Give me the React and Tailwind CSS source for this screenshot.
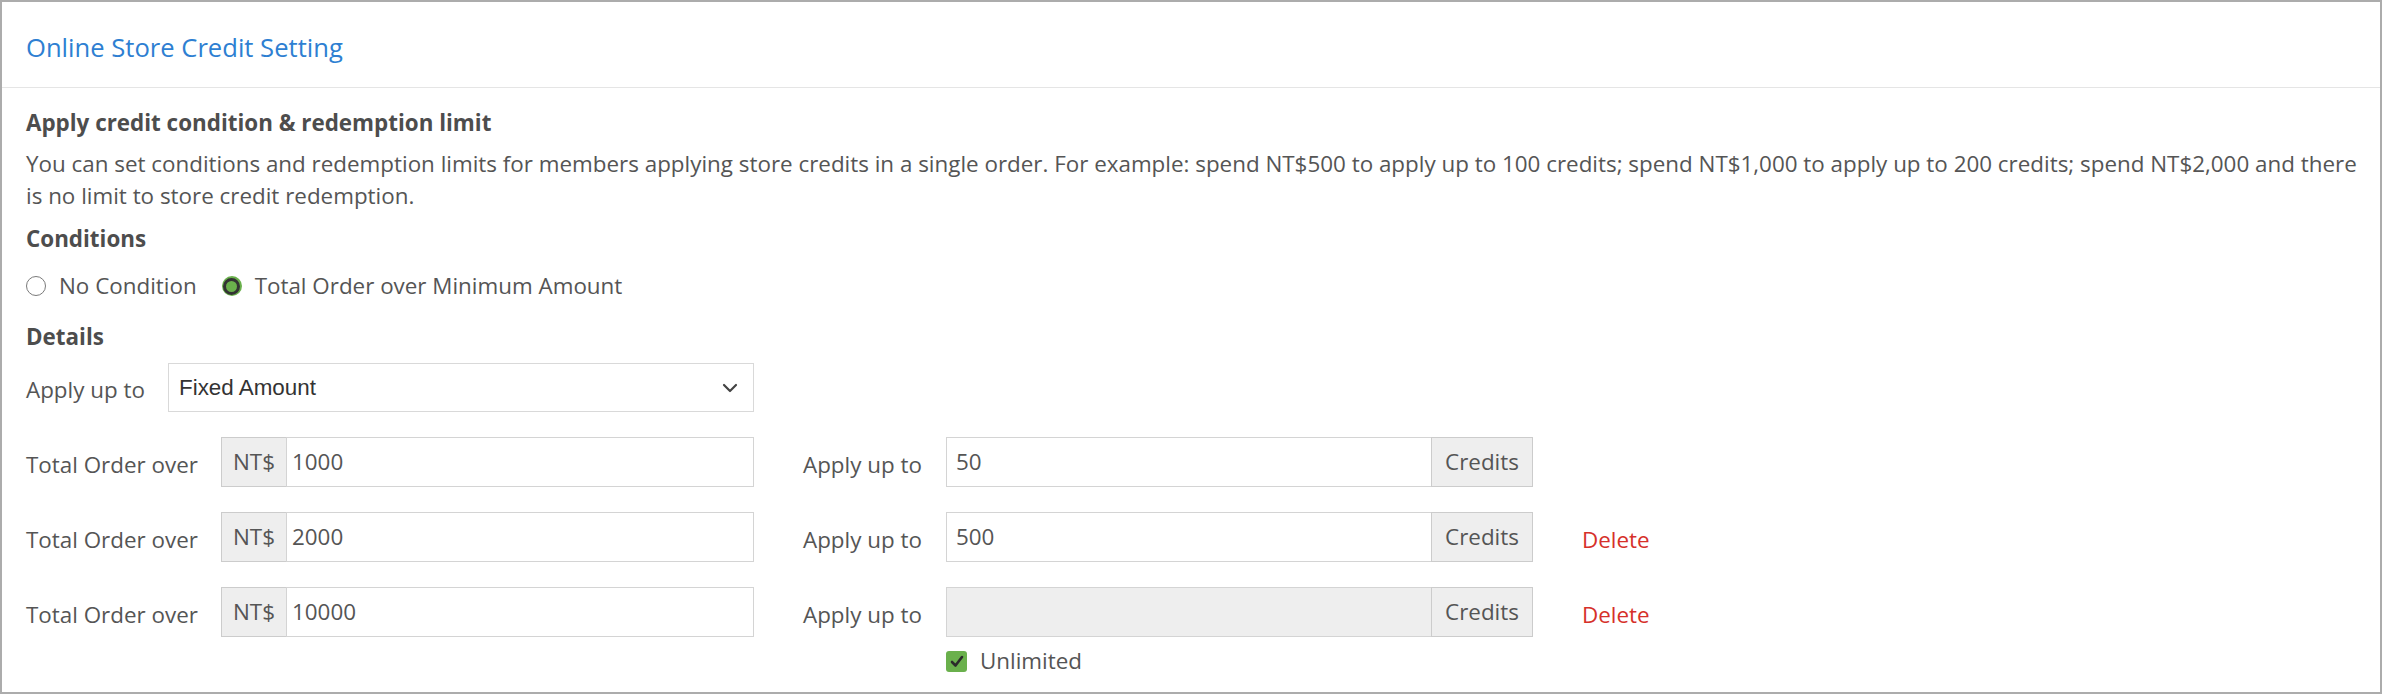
import React from 'react';

function Chevron() {
  return (
    <svg width="16" height="10" viewBox="0 0 16 10" fill="none">
      <polyline points="2,2 8,8 14,2" stroke="#444" strokeWidth="2.2" strokeLinecap="round" strokeLinejoin="round" />
    </svg>
  );
}

function CreditRow({ amount, credits, unlimited, removable }) {
  return (
    <div className="flex items-center h-[50px] mt-[25px]">
      <span className="w-[195px] pt-[6px]">Total Order over</span>
      <div className="flex w-[533px] h-[50px]">
        <span className="w-[65px] flex items-center justify-center bg-[#eeeeee] border border-[#cccccc] border-r-0">NT$</span>
        <input
          className="flex-1 min-w-0 border border-[#d4d4d4] pl-[5px] outline-none text-[#555] bg-white"
          defaultValue={amount}
        />
      </div>
      <span className="ml-[49px] w-[143px] pt-[6px]">Apply up to</span>
      <div className="flex w-[587px] h-[50px]">
        <input
          className={
            unlimited
              ? 'flex-1 min-w-0 border border-[#d4d4d4] border-r-0 pl-[9px] outline-none bg-[#eeeeee]'
              : 'flex-1 min-w-0 border border-[#d4d4d4] border-r-0 pl-[9px] outline-none text-[#555] bg-white'
          }
          defaultValue={credits}
          disabled={unlimited}
        />
        <span className="w-[102px] flex items-center justify-center bg-[#eeeeee] border border-[#cccccc]">Credits</span>
      </div>
      {removable && <a className="ml-[49px] pt-[6px] text-[#d6302a] cursor-pointer">Delete</a>}
    </div>
  );
}

function App() {
  return (
    <div className="w-[2382px] h-[694px] box-border overflow-hidden border-2 border-[#acacac] bg-white font-['Open_Sans',sans-serif] text-[#555] text-[22.4px] leading-[32px]">

      {/* Header */}
      <div className="pl-[24px] pt-[28px] pb-[21px] border-b border-[#e5e5e5]">
        <h1 className="text-[25.6px] leading-[36px] text-[#2e7fd2]">Online Store Credit Setting</h1>
      </div>

      {/* Body */}
      <div className="pl-[24px] pr-[20px] pt-[19px]">
        <h2 className="font-bold text-[#4d4d4d]">Apply credit condition &amp; redemption limit</h2>
        <p className="mt-[9px]">
          You can set conditions and redemption limits for members applying store credits in a single order. For example: spend NT$500 to apply up to 100 credits; spend NT$1,000 to apply up to 200 credits; spend NT$2,000 and there is no limit to store credit redemption.
        </p>

        <h3 className="mt-[11px] font-bold text-[#4d4d4d]">Conditions</h3>
        <div className="mt-[15px] h-[32px] flex items-center">
          <span className="w-[20px] h-[20px] rounded-full border-[1.5px] border-[#7a7a7a] bg-white"></span>
          <span className="ml-[13px]">No Condition</span>
          <span className="ml-[25px] w-[20px] h-[20px] rounded-full bg-[#6ab04c] flex items-center justify-center">
            <span className="w-[17px] h-[17px] rounded-full border-[3px] border-[#333333] bg-[#6ab04c]"></span>
          </span>
          <span className="ml-[13px]">Total Order over Minimum Amount</span>
        </div>

        <h3 className="mt-[19px] font-bold text-[#4d4d4d]">Details</h3>
        <div className="mt-[10px] flex items-center h-[49px]">
          <span className="w-[142px] pt-[4px]">Apply up to</span>
          <div className="w-[586px] h-[49px] border border-[#d9d9d9] flex items-center justify-between pl-[10px] pr-[15px] font-['Liberation_Sans',Arial,sans-serif] text-[#333]">
            <span>Fixed Amount</span>
            <Chevron />
          </div>
        </div>

        <CreditRow amount="1000" credits="50" />
        <CreditRow amount="2000" credits="500" removable />
        <CreditRow amount="10000" credits="" unlimited removable />

        <div className="mt-[8px] h-[32px] flex items-center ml-[920px]">
          <span className="w-[21px] h-[21px] rounded-[3px] bg-[#6ab04c] flex items-center justify-center">
            <svg width="14" height="13" viewBox="0 0 14 13" fill="none">
              <path d="M2 7 L5.5 10.5 L12 2" stroke="#2b2b2b" strokeWidth="2.6" strokeLinecap="round" strokeLinejoin="round" />
            </svg>
          </span>
          <span className="ml-[13px]">Unlimited</span>
        </div>
      </div>
    </div>
  );
}

export default App;
